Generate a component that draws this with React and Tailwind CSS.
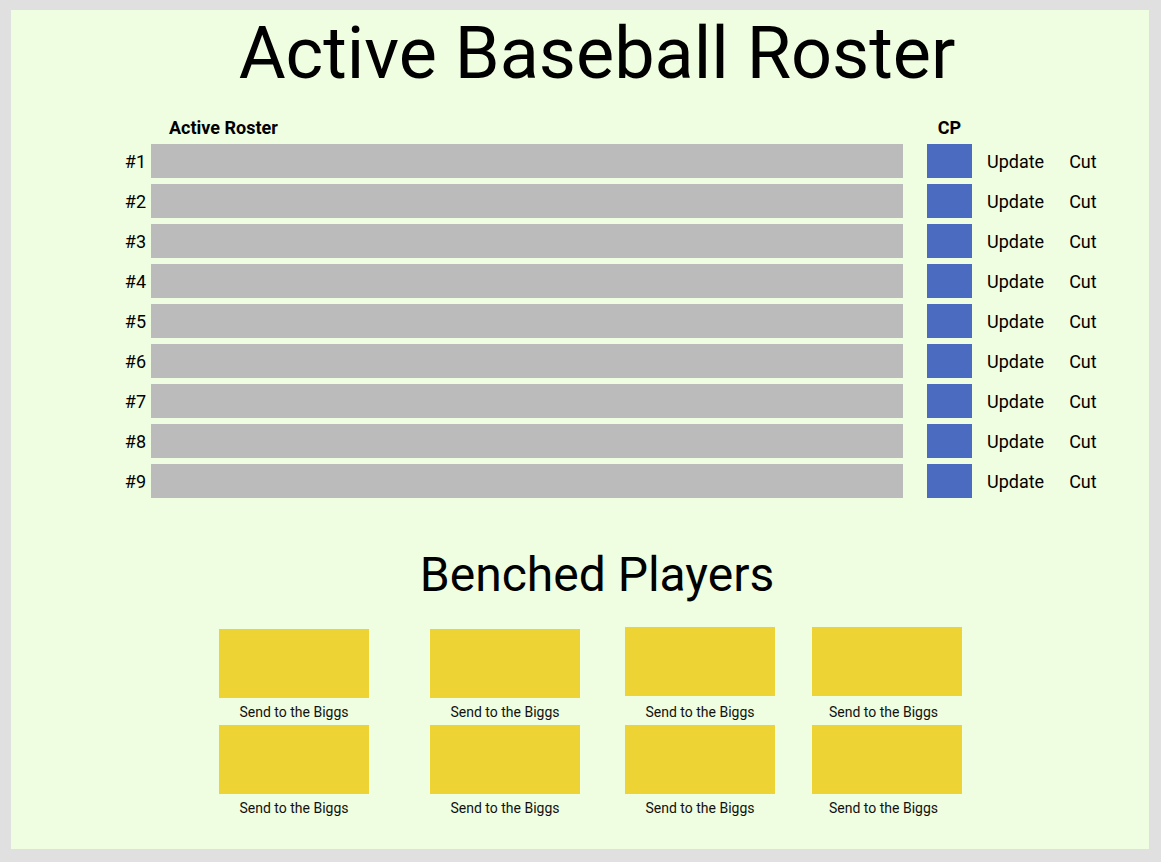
import React from "react";

const rows = [1, 2, 3, 4, 5, 6, 7, 8, 9];

function BenchItem({ className = "", labelClass = "mt-[6px]" }) {
  return (
    <div className={"flex flex-col items-center w-[150px] " + className}>
      <div className="w-[150px] h-[69px] bg-[#eed334]" />
      <div className={labelClass + " text-[14px] leading-[16px] text-[#111]"}>Send to the Biggs</div>
    </div>
  );
}

export default function App() {
  return (
    <div
      className="w-[1161px] h-[862px] bg-[#e0e0e0] pt-[10px] pl-[11px]"
      style={{ fontFamily: "Roboto, 'Liberation Sans', sans-serif" }}
    >
      <div className="w-[1138px] h-[839px] bg-[#effde0] flex flex-col text-black">
        <h1 className="mt-[8px] pl-[34px] text-center text-[72px] leading-[72px] font-normal">
          Active Baseball Roster
        </h1>

        <div className="mt-[27px] flex flex-col pl-[100px]">
          <div className="flex items-center h-[22px]">
            <div className="w-[40px]" />
            <div className="w-[752px] pl-[18px] text-[18px] font-bold leading-[22px]">Active Roster</div>
            <div className="ml-[24px] w-[45px] text-center text-[18px] font-bold leading-[22px]">CP</div>
          </div>
          <div className="mt-[5px] flex flex-col gap-[6px]">
            {rows.map((n) => (
              <div key={n} className="flex items-center h-[34px]">
                <div className="w-[40px] pr-[5px] text-right text-[18px]">#{n}</div>
                <div className="w-[752px] h-[34px] bg-[#bbbbbb]" />
                <div className="ml-[24px] w-[45px] h-[34px] bg-[#4a6bbf]" />
                <div className="ml-[15px] text-[18px]">Update</div>
                <div className="ml-[25px] text-[18px]">Cut</div>
              </div>
            ))}
          </div>
        </div>

        <h2 className="mt-[49px] pl-[34px] text-center text-[48px] leading-[56px] font-normal">
          Benched Players
        </h2>

        <div className="mt-[24px] flex flex-col gap-[5px] pl-[208px]">
          <div className="flex items-start h-[93px]">
            <BenchItem className="mt-[2px]" />
            <BenchItem className="ml-[61px] mt-[2px]" />
            <BenchItem className="ml-[45px]" labelClass="mt-[8px]" />
            <BenchItem className="ml-[37px]" labelClass="mt-[8px] mr-[7px]" />
          </div>
          <div className="flex items-start">
            <BenchItem />
            <BenchItem className="ml-[61px]" />
            <BenchItem className="ml-[45px]" />
            <BenchItem className="ml-[37px]" labelClass="mt-[6px] mr-[7px]" />
          </div>
        </div>
      </div>
    </div>
  );
}
